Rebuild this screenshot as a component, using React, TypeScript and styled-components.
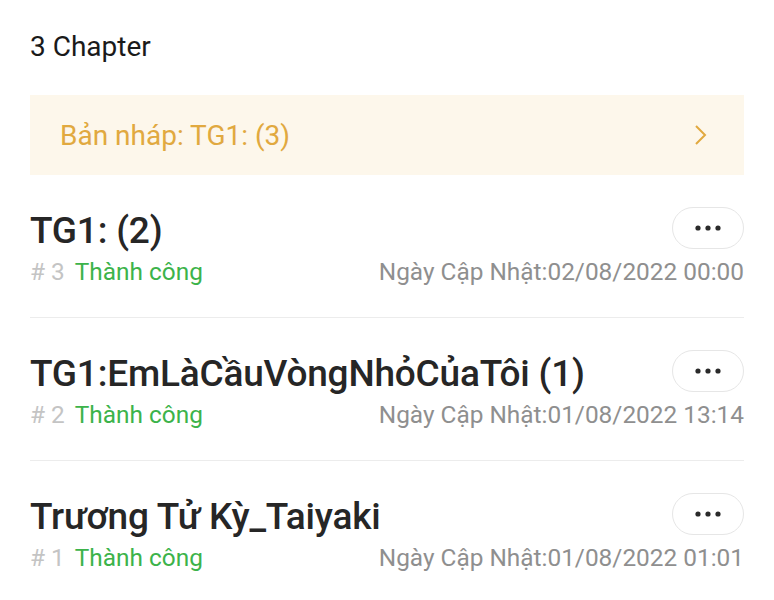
import React from 'react';
import styled, {createGlobalStyle} from 'styled-components';

const Global = createGlobalStyle`
	body {
		margin: 0;
		background: #ffffff;
		font-family: Roboto, "Noto Sans", sans-serif;
	}
`;

const Page = styled.div`
	width: 774px;
	padding: 0 30px;
	box-sizing: border-box;
`;

const Heading = styled.div`
	height: 95px;
	display: flex;
	align-items: center;
	padding-bottom: 2px;
	box-sizing: border-box;
	font-size: 28px;
	color: #1a1a1a;
`;

const Draft = styled.div`
	height: 80px;
	display: flex;
	align-items: center;
	justify-content: space-between;
	padding: 0 36px 0 30px;
	background: #fdf7eb;
	color: #e1a93f;
	font-size: 28px;
`;

const Row = styled.div<{last?: boolean}>`
	height: 143px;
	padding-top: 32px;
	box-sizing: border-box;
	border-bottom: ${p => (p.last ? 'none' : '1.5px solid #ececec')};
`;

const TitleLine = styled.div`
	display: flex;
	align-items: center;
	justify-content: space-between;
	height: 42px;
`;

const Title = styled.div`
	font-size: 37px;
	font-weight: 500;
	color: #262626;
	letter-spacing: -0.2px;
	margin-top: 4px;
`;

const More = styled.button`
	width: 72px;
	height: 42px;
	border-radius: 21px;
	border: 1.5px solid #e6e6e6;
	background: #fff;
	display: flex;
	align-items: center;
	justify-content: center;
	padding: 0;
`;

const Meta = styled.div`
	display: flex;
	align-items: center;
	justify-content: space-between;
	margin-top: 8px;
	font-size: 24.4px;
`;

const Status = styled.div`
	display: flex;
	gap: 10px;
`;

const Index = styled.span`
	color: #c4c4c4;
`;

const Ok = styled.span`
	color: #3cb34a;
`;

const Date = styled.span`
	color: #8f8f8f;
`;

const Dots = () => (
	<svg width="30" height="8" viewBox="0 0 30 8">
		<circle cx="5" cy="4" r="2.6" fill="#2a2a2a" />
		<circle cx="15" cy="4" r="2.6" fill="#2a2a2a" />
		<circle cx="25" cy="4" r="2.6" fill="#2a2a2a" />
	</svg>
);

const Chevron = () => (
	<svg width="14" height="22" viewBox="0 0 14 22">
		<path d="M2 2 L11 11 L2 20" fill="none" stroke="#e1a93f" strokeWidth="2" />
	</svg>
);

const chapters = [
	{title: 'TG1: (2)', num: 3, date: '02/08/2022 00:00'},
	{title: 'TG1:EmLàCầuVòngNhỏCủaTôi (1)', num: 2, date: '01/08/2022 13:14'},
	{title: 'Trương Tử Kỳ_Taiyaki', num: 1, date: '01/08/2022 01:01'},
];

const App = () => (
	<Page>
		<Global />
		<Heading>3 Chapter</Heading>
		<Draft>
			<span>Bản nháp: TG1: (3)</span>
			<Chevron />
		</Draft>
		{chapters.map((c, i) => (
			<Row key={c.num} last={i === chapters.length - 1}>
				<TitleLine>
					<Title>{c.title}</Title>
					<More><Dots /></More>
				</TitleLine>
				<Meta>
					<Status>
						<Index># {c.num}</Index>
						<Ok>Thành công</Ok>
					</Status>
					<Date>Ngày Cập Nhật:{c.date}</Date>
				</Meta>
			</Row>
		))}
	</Page>
);

export default App;
